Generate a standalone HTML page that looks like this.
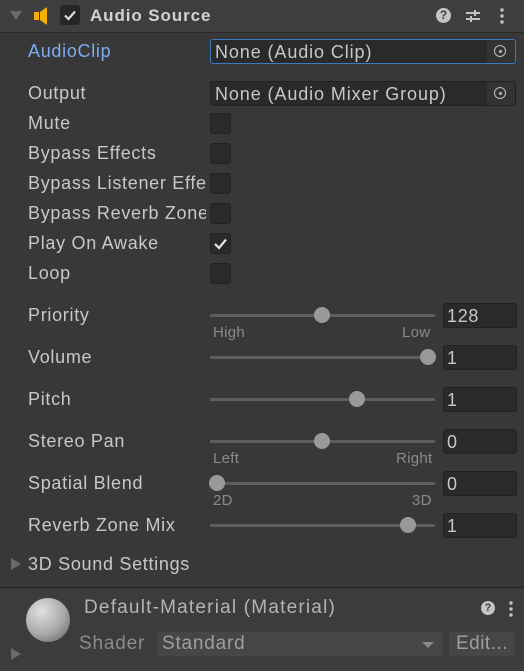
<!DOCTYPE html><html><head><style>
body{margin:0;width:524px;height:670px;background:#383838;font-family:"Liberation Sans",sans-serif;color:#c8c8c8;position:relative;overflow:hidden;font-size:18px;letter-spacing:0.7px}
.a{position:absolute}
.lbl{position:absolute;left:28px;white-space:nowrap;overflow:hidden;width:178px}
.cb{position:absolute;left:210px;width:19px;height:19px;background:#2a2a2a;border:1px solid #222;border-radius:3px}
.fld{position:absolute;left:210px;width:306px;height:25px;background:#2a2a2a;border:1px solid #212121;border-radius:3px;box-sizing:border-box;padding-left:4px;line-height:24px;white-space:nowrap;letter-spacing:0.9px}
.tr{position:absolute;left:210px;width:225px;height:3px;background:#5e5e5e}
.th{position:absolute;width:16px;height:16px;border-radius:50%;background:#999}
.num{position:absolute;left:443px;width:74px;height:25px;background:#2a2a2a;border:1px solid #212121;border-radius:3px;box-sizing:border-box;padding-left:3px;line-height:24px}
.sm{position:absolute;font-size:15px;color:#8a8a8a;letter-spacing:0.3px}
.pick{position:absolute;right:0;top:0;width:28px;height:23px;background:#333;border-radius:0 3px 3px 0}
.pick:after{content:"";position:absolute;left:7px;top:5px;width:10px;height:10px;border:1.5px solid #bbb;border-radius:50%}
.pick:before{content:"";position:absolute;left:12px;top:10px;width:3px;height:3px;background:#bbb;border-radius:50%;z-index:1}
</style></head><body>
<div class="a" style="left:0;top:0;width:524px;height:32px;background:#3e3e3e;border-bottom:1px solid #2a2a2a"></div>
<div class="a" style="left:10px;top:11px;width:0;height:0;border-left:6px solid transparent;border-right:6px solid transparent;border-top:9px solid #6a6a6a"></div>
<svg class="a" style="left:33px;top:6px" width="18" height="20"><rect x="1" y="6" width="5" height="8" fill="#f4b000"/><path d="M7 6 L14 1 V19 L7 14Z" fill="#f4b000"/></svg>
<div class="a" style="left:60px;top:5px;width:20px;height:20px;background:#262626;border-radius:3px"></div>
<svg class="a" style="left:60px;top:5px" width="20" height="20"><path d="M5 10.5 L8.5 14 L15 6.5" stroke="#ddd" stroke-width="2.2" fill="none"/></svg>
<div class="a" style="left:90px;top:6px;font-weight:bold;font-size:17px;color:#d2d2d2;letter-spacing:0.9px">Audio Source</div>
<div class="a" style="left:436px;top:8px;width:15px;height:15px;border-radius:50%;background:#c4c4c4;color:#3e3e3e;font-size:12px;font-weight:bold;text-align:center;line-height:15px;letter-spacing:0">?</div>
<svg class="a" style="left:464px;top:7px" width="18" height="18"><path d="M2 6H16M2 12H16" stroke="#c4c4c4" stroke-width="2"/><path d="M11 3V9M7 9V15" stroke="#c4c4c4" stroke-width="2"/></svg>
<svg class="a" style="left:499px;top:7px" width="6" height="18"><circle cx="3" cy="3" r="1.7" fill="#c4c4c4"/><circle cx="3" cy="9" r="1.7" fill="#c4c4c4"/><circle cx="3" cy="15" r="1.7" fill="#c4c4c4"/></svg>

<div class="lbl" style="top:41px;color:#7bacf0">AudioClip</div>
<div class="fld" style="top:39px;border:1px solid #3a79c4;">None (Audio Clip)<div class="pick"></div></div>
<div class="lbl" style="top:83px">Output</div>
<div class="fld" style="top:81px">None (Audio Mixer Group)<div class="pick"></div></div>

<div class="lbl" style="top:113px">Mute</div><div class="cb" style="top:113px"></div>
<div class="lbl" style="top:143px">Bypass Effects</div><div class="cb" style="top:143px"></div>
<div class="lbl" style="top:173px">Bypass Listener Effects</div><div class="cb" style="top:173px"></div>
<div class="lbl" style="top:203px">Bypass Reverb Zones</div><div class="cb" style="top:203px"></div>
<div class="lbl" style="top:233px">Play On Awake</div><div class="cb" style="top:233px"></div>
<svg class="a" style="left:210px;top:233px" width="21" height="21"><path d="M5 11 L9 15 L16 6.5" stroke="#e6e6e6" stroke-width="2.2" fill="none"/></svg>
<div class="lbl" style="top:263px">Loop</div><div class="cb" style="top:263px"></div>

<div class="lbl" style="top:305px">Priority</div><div class="tr" style="top:314px"></div><div class="th" style="left:314px;top:307px"></div><div class="num" style="top:303px">128</div>
<div class="sm" style="left:213px;top:324px">High</div><div class="sm" style="left:402px;top:324px">Low</div>
<div class="lbl" style="top:347px">Volume</div><div class="tr" style="top:356px"></div><div class="th" style="left:420px;top:349px"></div><div class="num" style="top:345px">1</div>
<div class="lbl" style="top:389px">Pitch</div><div class="tr" style="top:398px"></div><div class="th" style="left:349px;top:391px"></div><div class="num" style="top:387px">1</div>
<div class="lbl" style="top:431px">Stereo Pan</div><div class="tr" style="top:440px"></div><div class="th" style="left:314px;top:433px"></div><div class="num" style="top:429px">0</div>
<div class="sm" style="left:213px;top:450px">Left</div><div class="sm" style="left:396px;top:450px">Right</div>
<div class="lbl" style="top:473px">Spatial Blend</div><div class="tr" style="top:482px"></div><div class="th" style="left:209px;top:475px"></div><div class="num" style="top:471px">0</div>
<div class="sm" style="left:213px;top:492px">2D</div><div class="sm" style="left:412px;top:492px">3D</div>
<div class="lbl" style="top:515px">Reverb Zone Mix</div><div class="tr" style="top:524px"></div><div class="th" style="left:400px;top:517px"></div><div class="num" style="top:513px">1</div>

<div class="a" style="left:11px;top:558px;width:0;height:0;border-top:6px solid transparent;border-bottom:6px solid transparent;border-left:10px solid #6a6a6a"></div>
<div class="lbl" style="top:554px;width:200px">3D Sound Settings</div>

<div class="a" style="left:0;top:587px;width:524px;height:83px;background:#3c3c3c;border-top:1px solid #232323"></div>
<div class="a" style="left:26px;top:598px;width:44px;height:44px;border-radius:50%;background:radial-gradient(circle at 35% 30%,#e0e0e0,#a8a8a8 55%,#5a5a5a)"></div>
<div class="a" style="left:11px;top:648px;width:0;height:0;border-top:6px solid transparent;border-bottom:6px solid transparent;border-left:10px solid #6a6a6a"></div>
<div class="a" style="left:84px;top:597px;color:#b4b4b4;font-size:19px;letter-spacing:1.2px">Default-Material (Material)</div>
<div class="a" style="left:481px;top:601px;width:14px;height:14px;border-radius:50%;background:#c4c4c4;color:#3c3c3c;font-size:11px;font-weight:bold;text-align:center;line-height:14px;letter-spacing:0">?</div>
<svg class="a" style="left:508px;top:600px" width="6" height="18"><circle cx="3" cy="3" r="1.7" fill="#c4c4c4"/><circle cx="3" cy="9" r="1.7" fill="#c4c4c4"/><circle cx="3" cy="15" r="1.7" fill="#c4c4c4"/></svg>
<div class="a" style="left:79px;top:633px;color:#8c8c8c;font-size:19px;letter-spacing:0.8px">Shader</div>
<div class="a" style="left:157px;top:632px;width:285px;height:24px;background:#464646;border-radius:3px;box-sizing:border-box;padding-left:5px;line-height:24px;color:#9e9e9e;font-size:19px;letter-spacing:0.8px">Standard</div>
<div class="a" style="left:422px;top:642px;border-left:6px solid transparent;border-right:6px solid transparent;border-top:6px solid #8a8a8a"></div>
<div class="a" style="left:449px;top:632px;width:66px;height:24px;background:#464646;border-radius:3px;text-align:center;line-height:24px;color:#9e9e9e;font-size:19px;letter-spacing:0.5px">Edit...</div>
</body></html>
